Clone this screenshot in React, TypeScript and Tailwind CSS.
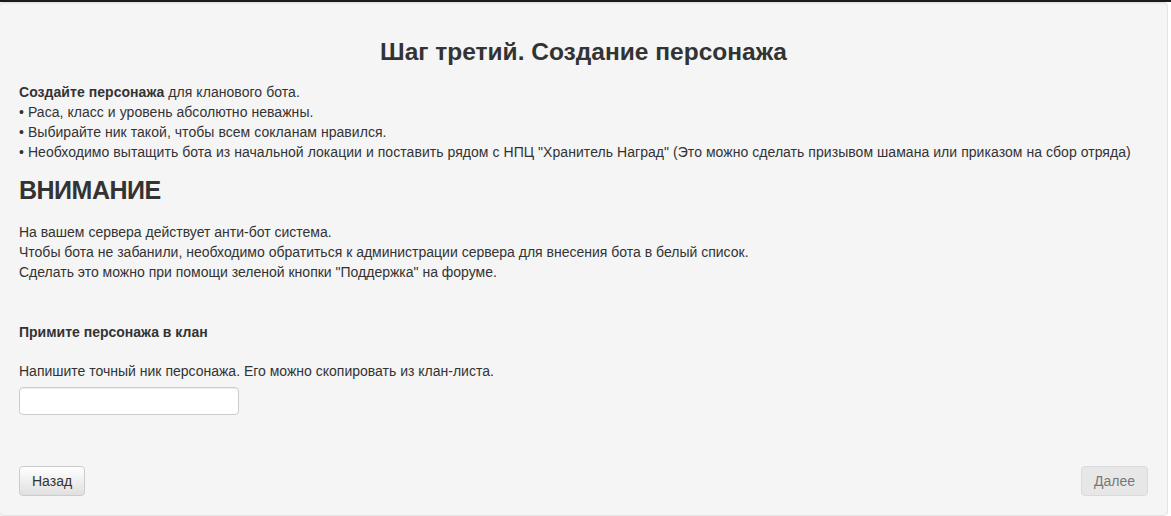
import React, { useState } from "react";

// Step 3 of the clan bot wizard: character creation
export default function App() {
  const [nick, setNick] = useState("");

  return (
    <div className="min-h-screen bg-white text-[#333] text-[14px] leading-[20px]" style={{ fontFamily: '"Liberation Sans", Arial, sans-serif' }}>
      <div className="h-[2px] bg-[#1a1a1a]"></div>
      <div className="mr-[3px] -ml-px bg-[#f5f5f5] border border-[#e3e3e3] rounded-[4px] shadow-[inset_0_1px_1px_rgba(0,0,0,0.05)] px-[19px] pt-[36px] pb-[19px]">
        <h3 className="text-center text-[24.5px] leading-[26px] font-bold">Шаг третий. Создание персонажа</h3>

        <div className="mt-[17px] tracking-[0.05px]">
          <div><b>Создайте персонажа</b> для кланового бота.</div>
          <div>• Раса, класс и уровень абсолютно неважны.</div>
          <div>• Выбирайте ник такой, чтобы всем сокланам нравился.</div>
          <div>• Необходимо вытащить бота из начальной локации и поставить рядом с НПЦ "Хранитель Наград" (Это можно сделать призывом шамана или приказом на сбор отряда)</div>
        </div>

        <h2 className="mt-[12px] text-[25px] leading-[33px] font-bold tracking-[-0.5px]">ВНИМАНИЕ</h2>

        <div className="mt-[15px]">
          <div>На вашем сервера действует анти-бот система.</div>
          <div>Чтобы бота не забанили, необходимо обратиться к администрации сервера для внесения бота в белый список.</div>
          <div>Сделать это можно при помощи зеленой кнопки "Поддержка" на форуме.</div>
        </div>

        <div className="mt-[40px] font-bold">Примите персонажа в клан</div>

        <div className="mt-[19px]">Напишите точный ник персонажа. Его можно скопировать из клан-листа.</div>
        <input
          className="mt-[6px] block w-[220px] h-[28px] bg-white border border-[#ccc] rounded-[4px] px-2 shadow-[inset_0_1px_1px_rgba(0,0,0,0.075)] outline-none"
          type="text"
          value={nick}
          onChange={e => setNick(e.target.value)}
        />

        <div className="mt-[51px] flex justify-between">
          <button className="h-[30px] px-[12px] rounded-[4px] border border-[#ccc] bg-gradient-to-b from-white to-[#e0e0e0] text-[#333] text-[14px] shadow-[0_1px_0_rgba(255,255,255,0.15)]">Назад</button>
          <button disabled className="h-[30px] px-[12px] rounded-[4px] border border-[#ccc] bg-[#e0e0e0] text-[#333] text-[14px] opacity-[0.65]">Далее</button>
        </div>
      </div>
    </div>
  );
}
